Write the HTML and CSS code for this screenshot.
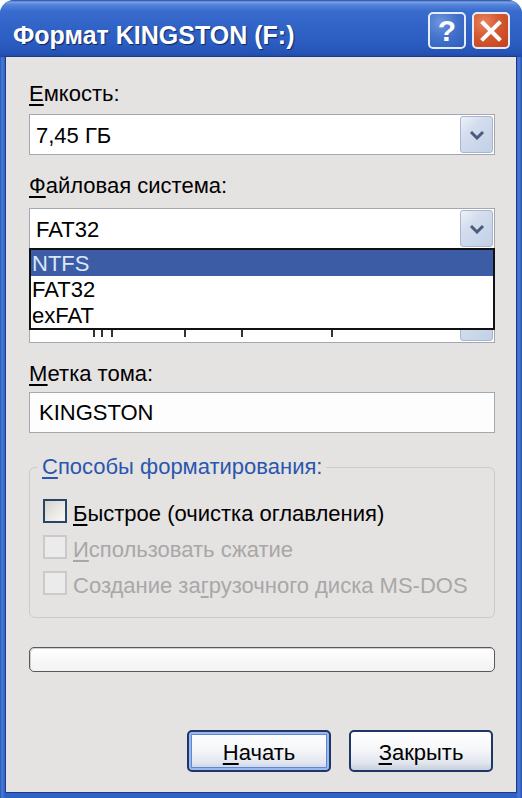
FILE: index.html
```html
<!DOCTYPE html>
<html lang="ru">
<head>
<meta charset="utf-8">
<title>Формат KINGSTON (F:)</title>
<link rel="stylesheet" href="styles.css">
</head>
<body>
<div class="window">
  <div class="titlebar">
    <span class="title">Формат KINGSTON (F:)</span>
    <div class="tb-buttons">
      <span class="tb-btn help">?</span>
      <span class="tb-btn close">
        <svg width="22" height="22" viewBox="0 0 22 22"><path d="M3 3 L19 19 M19 3 L3 19" stroke="#fff" stroke-width="4" stroke-linecap="square" fill="none"/></svg>
      </span>
    </div>
  </div>
  <div class="client">
    <div class="label"><u>Е</u>мкость:</div>
    <div class="combo gap-s">
      <span class="combo-text">7,45 ГБ</span>
      <span class="dd"><svg width="16" height="10" viewBox="0 0 16 10"><path d="M2 2 L8 8 L14 2" stroke="#4b5b7c" stroke-width="3" fill="none"/></svg></span>
    </div>
    <div class="label gap-l"><u>Ф</u>айловая система:</div>
    <div class="combo gap-m has-list">
      <span class="combo-text">FAT32</span>
      <span class="dd"><svg width="16" height="10" viewBox="0 0 16 10"><path d="M2 2 L8 8 L14 2" stroke="#4b5b7c" stroke-width="3" fill="none"/></svg></span>
      <div class="list">
        <div class="opt sel">NTFS</div>
        <div class="opt">FAT32</div>
        <div class="opt">exFAT</div>
      </div>
    </div>
    <div class="label gap-l"></div>
    <div class="combo gap-m">
      <span class="combo-text">
        <span class="ticks"><i></i><i></i><i></i><i></i><i></i><i></i></span>
      </span>
      <span class="dd"><svg width="16" height="10" viewBox="0 0 16 10"><path d="M2 2 L8 8 L14 2" stroke="#4b5b7c" stroke-width="3" fill="none"/></svg></span>
    </div>
    <div class="label gap-l"><u>М</u>етка тома:</div>
    <div class="input">KINGSTON</div>
    <fieldset class="group">
      <legend><u>С</u>пособы форматирования:</legend>
      <div class="checks">
        <div class="chk-row"><span class="box"></span><span class="chk-label"><u>Б</u>ыстрое (очистка оглавления)</span></div>
        <div class="chk-row disabled"><span class="box"></span><span class="chk-label"><u>И</u>спользовать сжатие</span></div>
        <div class="chk-row disabled"><span class="box"></span><span class="chk-label">Создание за<u>г</u>рузочного диска MS-DOS</span></div>
      </div>
    </fieldset>
    <div class="progress"></div>
    <div class="buttons">
      <span class="btn default"><span><u>Н</u>ачать</span></span>
      <span class="btn"><span><u>З</u>акрыть</span></span>
    </div>
  </div>
</div>
</body>
</html>
```
FILE: styles.css
```css
html, body {
  margin: 0;
  padding: 0;
  background: #ffffff;
}
body {
  font-family: "Liberation Sans", Arial, sans-serif;
  font-size: 22px;
  color: #000;
}
u {
  text-decoration-thickness: 2px;
  text-underline-offset: 3px;
}
.window {
  width: 522px;
  height: 798px;
  box-sizing: border-box;
  background: linear-gradient(to right, #2853b3 0, #4a7ad6 2px, #2f60c4 5px, #2f60c4 516px, #4a7ad6 519px, #2853b3 522px);
  border-radius: 14px 14px 0 0;
  display: flex;
  flex-direction: column;
  overflow: hidden;
}
.titlebar {
  height: 57px;
  flex: none;
  box-sizing: border-box;
  display: flex;
  align-items: flex-start;
  padding: 0 12px 0 13px;
  border-radius: 14px 14px 0 0;
  background: linear-gradient(to bottom, #23489e 0, #7aa2e6 2px, #5283da 5px, #3a6cce 11px, #3164c7 26px, #2c5cc0 44px, #2452b4 54px, #1d45a0 57px);
}
.title {
  flex: 1;
  color: #ffffff;
  font-weight: bold;
  font-size: 25px;
  line-height: 30px;
  margin-top: 20px;
  white-space: nowrap;
  text-shadow: 1px 1px 1px #0d2669;
}
.tb-buttons {
  display: flex;
  gap: 6px;
  margin-top: 12px;
}
.tb-btn {
  width: 38px;
  height: 37px;
  box-sizing: border-box;
  border: 2px solid #e6ecf8;
  border-radius: 5px;
  display: flex;
  align-items: center;
  justify-content: center;
}
.help {
  background: radial-gradient(circle at 30% 25%, #6f95dc 0, #4474cc 45%, #2e5cbc 100%);
  color: #fff;
  font-weight: bold;
  font-size: 30px;
  line-height: 1;
}
.close {
  background: radial-gradient(circle at 30% 25%, #ea8460 0, #d5582f 45%, #c1401d 100%);
}
.client {
  flex: 1;
  margin: 0 6px 6px;
  background: #e5e2e2;
  padding: 24px 21px 20px 23px;
  display: flex;
  flex-direction: column;
  box-shadow: 0 0 0 1px #1b3b8a;
}
.label {
  line-height: 26px;
  height: 26px;
  white-space: nowrap;
}
.gap-s { margin-top: 7px; }
.gap-m { margin-top: 9px; }
.gap-l { margin-top: 18px; }
.combo {
  position: relative;
  height: 41px;
  box-sizing: border-box;
  border: 1px solid #a3a8b1;
  background: #ffffff;
  display: flex;
  align-items: center;
  padding-left: 6px;
}
.combo-text {
  flex: 1;
  line-height: 26px;
  padding-top: 2px;
  white-space: nowrap;
  overflow: hidden;
}
.ticks {
  display: flex;
  height: 26px;
  align-items: flex-end;
}
.ticks i {
  display: block;
  width: 2px;
  height: 9px;
  background: #333;
}
.ticks i:nth-child(1) { margin-left: 57px; }
.ticks i:nth-child(2) { margin-left: 6px; }
.ticks i:nth-child(3) { margin-left: 8px; }
.ticks i:nth-child(4) { margin-left: 71px; }
.ticks i:nth-child(5) { margin-left: 55px; }
.ticks i:nth-child(6) { margin-left: 88px; }
.dd {
  flex: none;
  width: 33px;
  height: 37px;
  margin-right: 1px;
  box-sizing: border-box;
  border: 1px solid #aab6cc;
  border-radius: 3px;
  background: linear-gradient(135deg, #eef2fa 0, #d3ddee 35%, #c2cfe6 100%);
  display: flex;
  align-items: center;
  justify-content: center;
}
.has-list { z-index: 3; }
.list {
  position: absolute;
  left: -1px;
  right: -1px;
  top: 100%;
  background: #ffffff;
  border: 2px solid #111111;
  z-index: 5;
}
.opt {
  height: 26px;
  line-height: 27px;
  padding-left: 1px;
  white-space: nowrap;
}
.opt.sel {
  background: #3c5da6;
  color: #dbe6f8;
}
.input {
  margin-top: 5px;
  height: 41px;
  box-sizing: border-box;
  border: 1px solid #a3a8b1;
  background: #fdfdfd;
  padding-left: 9px;
  display: flex;
  align-items: center;
}
.group {
  margin: 21px 0 0;
  padding: 13px 0 16px 0;
  border: 1px solid #cdcaca;
  border-radius: 6px;
  min-width: 0;
}
.group legend {
  margin-left: 8px;
  padding: 0 4px;
  color: #2a57ad;
  line-height: 26px;
}
.checks {
  padding-left: 13px;
  display: flex;
  flex-direction: column;
}
.chk-row {
  height: 36px;
  display: flex;
  align-items: center;
  gap: 6px;
  white-space: nowrap;
}
.box {
  flex: none;
  width: 24px;
  height: 24px;
  box-sizing: border-box;
  border: 2px solid #2a4466;
  background: linear-gradient(135deg, #d4d2cc 0, #e8e7e3 50%, #f8f8f6 100%);
}
.chk-label {
  line-height: 26px;
  padding-top: 5px;
}
.chk-row.disabled .box {
  border-color: #cbc9c9;
  background: #ecebeb;
}
.chk-row.disabled .chk-label {
  color: #a9a7a7;
}
.progress {
  margin-top: 29px;
  height: 25px;
  box-sizing: border-box;
  border: 1px solid #595959;
  border-radius: 5px;
  background: linear-gradient(#ffffff, #f2f2f2);
  box-shadow: inset 1px 1px 0 #cfcfcf;
}
.buttons {
  margin-top: 58px;
  display: flex;
  justify-content: flex-end;
  gap: 18px;
  padding-right: 2px;
}
.btn {
  width: 144px;
  height: 42px;
  box-sizing: border-box;
  border: 2px solid #1f3766;
  border-radius: 5px;
  background: linear-gradient(#ffffff 0%, #f6f7fa 45%, #e2e6ee 80%, #c7cfde 100%);
  display: flex;
  align-items: center;
  justify-content: center;
  line-height: 26px;
}
.btn > span { padding-top: 3px; }
.btn.default {
  box-shadow: inset 0 0 0 2px #9bb9ec, inset 0 0 0 3px #5d87d4;
}
```
